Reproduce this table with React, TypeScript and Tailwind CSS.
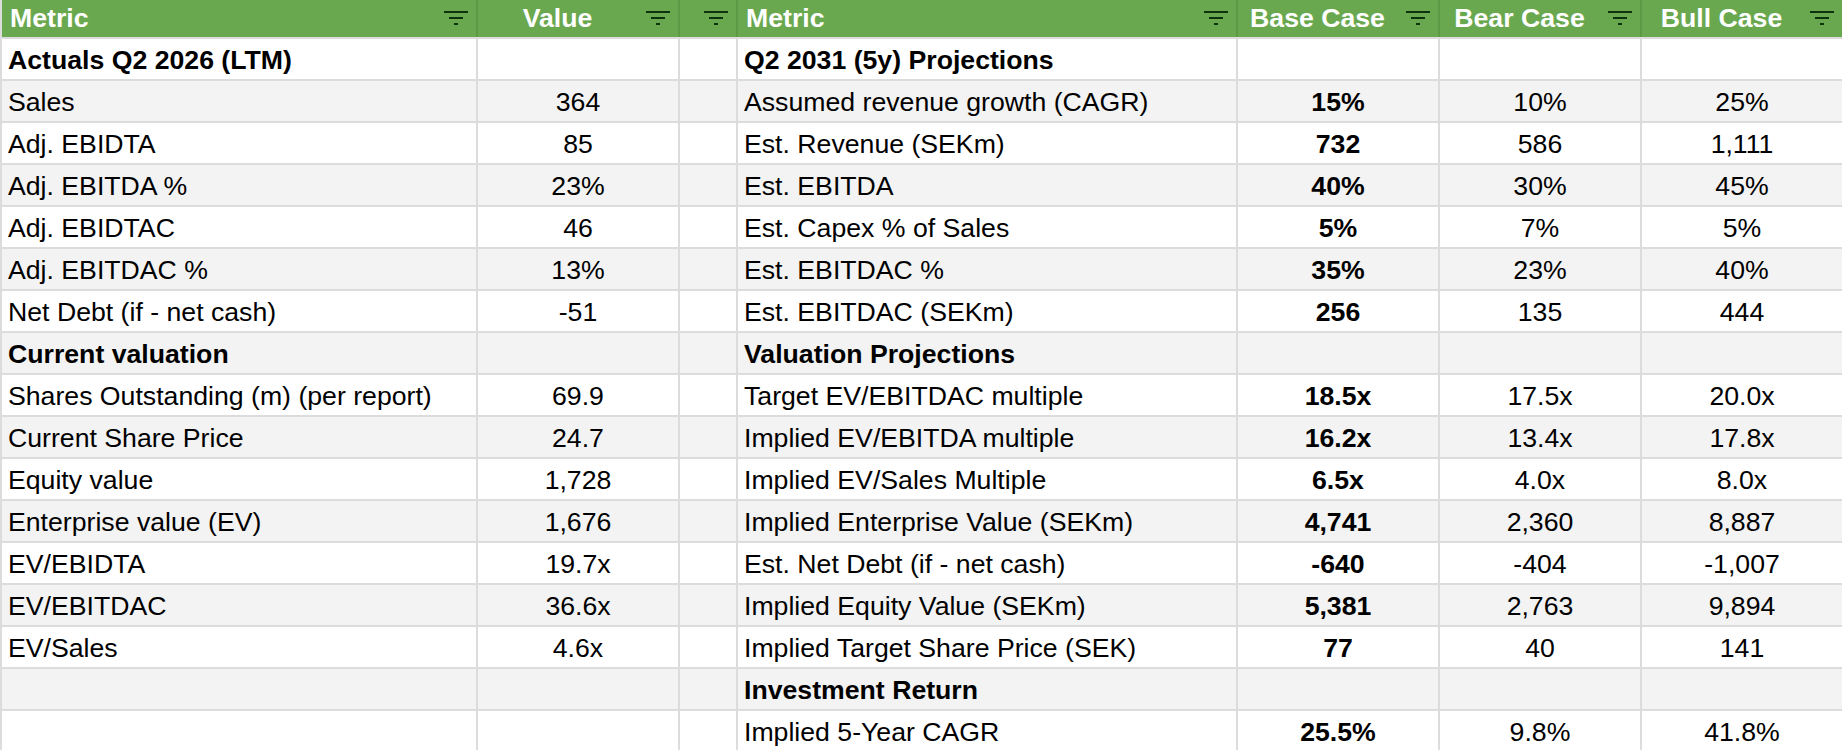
import React from "react";

type Row = {
  l: string;
  lv: string;
  r: string;
  b: string;
  be: string;
  bu: string;
  lh?: boolean;
  rh?: boolean;
};

const rows: Row[] = [
  { l: "Actuals Q2 2026 (LTM)", lv: "", r: "Q2 2031 (5y) Projections", b: "", be: "", bu: "", lh: true, rh: true },
  { l: "Sales", lv: "364", r: "Assumed revenue growth (CAGR)", b: "15%", be: "10%", bu: "25%" },
  { l: "Adj. EBIDTA", lv: "85", r: "Est. Revenue (SEKm)", b: "732", be: "586", bu: "1,111" },
  { l: "Adj. EBITDA %", lv: "23%", r: "Est. EBITDA", b: "40%", be: "30%", bu: "45%" },
  { l: "Adj. EBIDTAC", lv: "46", r: "Est. Capex % of Sales", b: "5%", be: "7%", bu: "5%" },
  { l: "Adj. EBITDAC %", lv: "13%", r: "Est. EBITDAC %", b: "35%", be: "23%", bu: "40%" },
  { l: "Net Debt (if - net cash)", lv: "-51", r: "Est. EBITDAC (SEKm)", b: "256", be: "135", bu: "444" },
  { l: "Current valuation", lv: "", r: "Valuation Projections", b: "", be: "", bu: "", lh: true, rh: true },
  { l: "Shares Outstanding (m) (per report)", lv: "69.9", r: "Target EV/EBITDAC multiple", b: "18.5x", be: "17.5x", bu: "20.0x" },
  { l: "Current Share Price", lv: "24.7", r: "Implied EV/EBITDA multiple", b: "16.2x", be: "13.4x", bu: "17.8x" },
  { l: "Equity value", lv: "1,728", r: "Implied EV/Sales Multiple", b: "6.5x", be: "4.0x", bu: "8.0x" },
  { l: "Enterprise value (EV)", lv: "1,676", r: "Implied Enterprise Value (SEKm)", b: "4,741", be: "2,360", bu: "8,887" },
  { l: "EV/EBIDTA", lv: "19.7x", r: "Est. Net Debt (if - net cash)", b: "-640", be: "-404", bu: "-1,007" },
  { l: "EV/EBITDAC", lv: "36.6x", r: "Implied Equity Value (SEKm)", b: "5,381", be: "2,763", bu: "9,894" },
  { l: "EV/Sales", lv: "4.6x", r: "Implied Target Share Price (SEK)", b: "77", be: "40", bu: "141" },
  { l: "", lv: "", r: "Investment Return", b: "", be: "", bu: "", rh: true },
  { l: "", lv: "", r: "Implied 5-Year CAGR", b: "25.5%", be: "9.8%", bu: "41.8%" },
];

const grid = "grid grid-cols-[474px_200px_56px_498px_200px_200px_200px] gap-x-[2px]";

function FilterIcon() {
  return (
    <svg width="24" height="16" viewBox="0 0 24 16" className="shrink-0">
      <rect x="0" y="0" width="24" height="2" fill="#0c330c" />
      <rect x="5" y="6" width="14" height="2" fill="#0c330c" />
      <rect x="10" y="12" width="4" height="2" fill="#0c330c" />
    </svg>
  );
}

function HeadCell({ label, left }: { label?: string; left?: boolean }) {
  return (
    <div className="flex h-[37px] items-center bg-[#6aa84f] pl-[3px] pr-[8px]">
      <span
        className={`flex-1 font-bold text-white leading-none ${left ? "pl-[5px] text-left" : "text-center"}`}
      >
        {label}
      </span>
      <span className="ml-[12px] flex items-center pt-[1px]">
        <FilterIcon />
      </span>
    </div>
  );
}

function Cell({
  text,
  bg,
  bold,
  center,
}: {
  text: string;
  bg: string;
  bold?: boolean;
  center?: boolean;
}) {
  return (
    <div
      className={`flex h-[40px] items-center overflow-hidden whitespace-nowrap pt-[3px] leading-none text-black ${bg} ${
        center ? "justify-center" : "justify-start pl-[6px]"
      } ${bold ? "font-bold" : "font-normal"}`}
    >
      {text}
    </div>
  );
}

export default function App() {
  return (
    <div
      className="h-[750px] w-[1842px] overflow-hidden bg-white text-[26.67px]"
      style={{ fontFamily: '"Liberation Sans", Arial, sans-serif' }}
    >
      <div className="flex flex-col gap-y-[2px] bg-[#dcdcdc] pl-[2px]">
        <div className={`${grid} bg-[#5e9a45]`}>
          <HeadCell label="Metric" left />
          <HeadCell label="Value" />
          <HeadCell />
          <HeadCell label="Metric" left />
          <HeadCell label="Base Case" />
          <HeadCell label="Bear Case" />
          <HeadCell label="Bull Case" />
        </div>
        {rows.map((r, i) => {
          const bg = i % 2 === 0 ? "bg-white" : "bg-[#f3f3f3]";
          return (
            <div key={i} className={grid}>
              <Cell text={r.l} bg={bg} bold={r.lh} />
              <Cell text={r.lv} bg={bg} center />
              <Cell text="" bg={bg} />
              <Cell text={r.r} bg={bg} bold={r.rh} />
              <Cell text={r.b} bg={bg} center bold />
              <Cell text={r.be} bg={bg} center />
              <Cell text={r.bu} bg={bg} center />
            </div>
          );
        })}
      </div>
    </div>
  );
}
